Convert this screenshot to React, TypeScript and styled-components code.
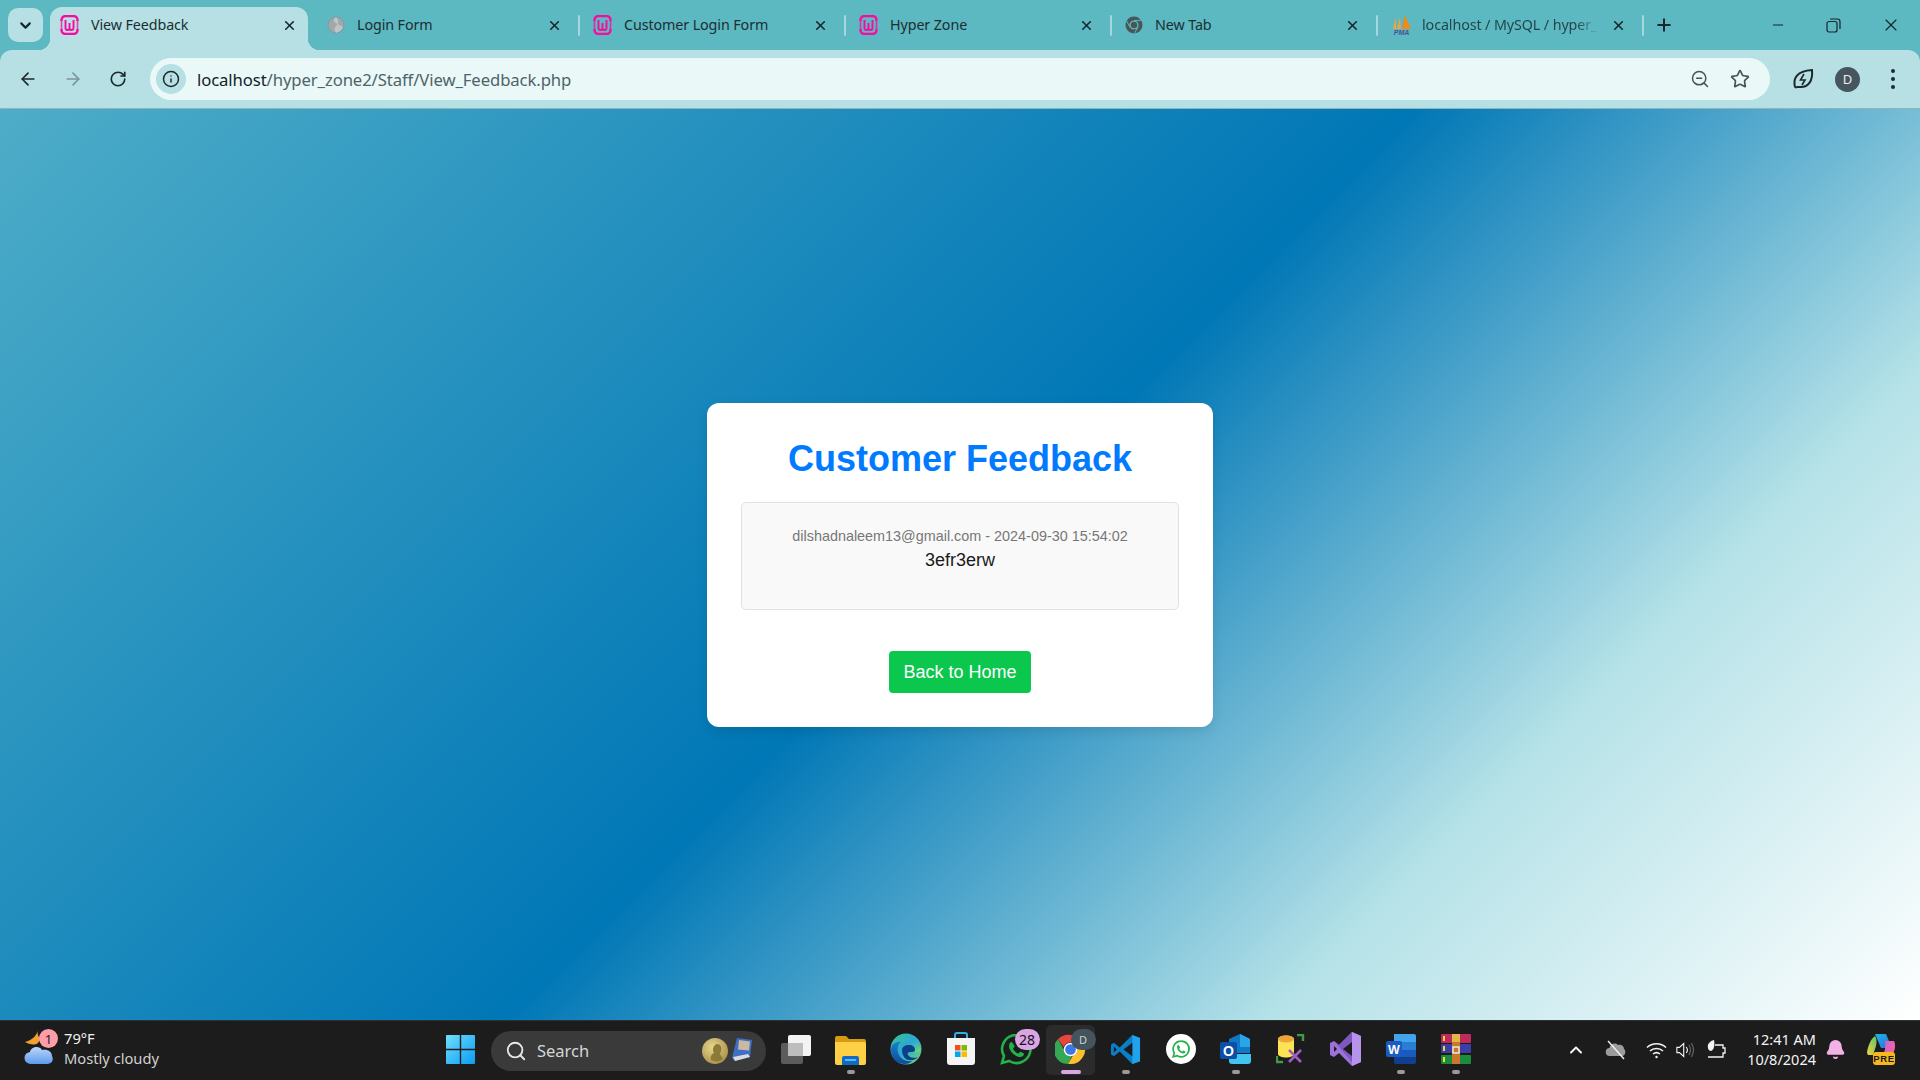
import React from "react";
import styled, { createGlobalStyle } from "styled-components";
import { ArrowLeft, ArrowRight, RotateCw, Info, ZoomOut, Star, X, Plus, Minus, ChevronDown, ChevronUp, Search as SearchGlyph, Bell } from "lucide-react";

const Global = createGlobalStyle`
  html, body { margin: 0; padding: 0; height: 100%; overflow: hidden; }
  #root { height: 100%; }
  * { box-sizing: border-box; }
`;

const Screen = styled.div`
  height: 1080px;
  display: flex;
  flex-direction: column;
  font-family: "Noto Sans", "Open Sans", sans-serif;
  background: #5cb8c1;
`;

const TabStrip = styled.div`
  height: 50px;
  flex: none;
  display: flex;
  align-items: flex-end;
  padding-left: 8px;
  background: #5cb8c1;
`;

const TabMenu = styled.div`
  width: 35px;
  height: 34px;
  margin: 0 7px 8px 0;
  border-radius: 10px;
  background: #b6e0e4;
  color: #16282b;
  display: flex;
  align-items: center;
  justify-content: center;
`;

const ActiveTab = styled.div`
  position: relative;
  width: 258px;
  height: 43px;
  margin-right: 6px;
  padding: 0 11px 7px 10px;
  display: flex;
  align-items: center;
  gap: 12px;
  border-radius: 12px 12px 0 0;
  background: #b6e0e4;
  &::before, &::after {
    content: "";
    position: absolute;
    bottom: 0;
    width: 12px;
    height: 12px;
  }
  &::before { left: -12px; background: radial-gradient(circle at 0 0, transparent 12px, #b6e0e4 12.5px); }
  &::after { right: -12px; background: radial-gradient(circle at 100% 0, transparent 12px, #b6e0e4 12.5px); }
`;

const Tab = styled.div`
  width: 266px;
  height: 50px;
  padding-left: 13px;
  display: flex;
  align-items: center;
  gap: 12px;
`;

const TabTitle = styled.span<{ $faded?: boolean }>`
  flex: 1;
  min-width: 0;
  font-size: 14.3px;
  line-height: 20px;
  letter-spacing: -0.1px;
  white-space: nowrap;
  overflow: hidden;
  color: #1c2e32;
  ${(p) => p.$faded && `
    -webkit-mask-image: linear-gradient(90deg, #000 88%, transparent 100%);
    mask-image: linear-gradient(90deg, #000 88%, transparent 100%);
    color: #24474d;
    margin-left: -2px;
  `}
`;

const CloseSlot = styled.span`
  width: 16px;
  height: 16px;
  flex: none;
  color: #16282b;
  display: flex;
  align-items: center;
  justify-content: center;
`;

const TabSep = styled.span`
  width: 2px;
  height: 21px;
  margin-left: 4px;
  flex: none;
  border-radius: 1px;
  background: #a5d8dd;
`;

const NewTab = styled.div`
  width: 40px;
  height: 50px;
  color: #16282b;
  display: flex;
  align-items: center;
  justify-content: center;
`;

const WindowControls = styled.div`
  margin-left: auto;
  display: flex;
`;

const WindowButton = styled.div<{ $w?: number }>`
  width: ${(p) => p.$w ?? 58}px;
  height: 50px;
  color: #14262a;
  display: flex;
  align-items: center;
  justify-content: center;
`;

const Toolbar = styled.div`
  height: 59px;
  flex: none;
  padding-left: 5px;
  display: flex;
  align-items: center;
  border-radius: 12px 12px 0 0;
  border-bottom: 1px solid #8fb4ba;
  background: #b6e0e4;
`;

const ToolButton = styled.div<{ $dim?: boolean }>`
  width: 45px;
  height: 42px;
  flex: none;
  color: ${(p) => (p.$dim ? "#7d9499" : "#1d2a2d")};
  display: flex;
  align-items: center;
  justify-content: center;
`;

const AddressBar = styled.div`
  width: 1620px;
  height: 42px;
  margin: 0 10px 0 10px;
  padding: 0 10px 0 6px;
  border-radius: 21px;
  background: #ebf8f8;
  display: flex;
  align-items: center;
`;

const InfoChip = styled.div`
  width: 30px;
  height: 30px;
  flex: none;
  margin-right: 11px;
  border-radius: 50%;
  background: #b6e0e4;
  color: #1d2a2d;
  display: flex;
  align-items: center;
  justify-content: center;
`;

const Url = styled.div`
  flex: 1;
  font-size: 16.7px;
  letter-spacing: -0.1px;
  color: #4d6468;
  white-space: nowrap;
`;

const UrlHost = styled.span`
  color: #14232a;
`;

const AddressAction = styled.div`
  width: 40px;
  height: 30px;
  color: #475356;
  display: flex;
  align-items: center;
  justify-content: center;
`;

const Avatar = styled.div`
  width: 25px;
  height: 25px;
  border-radius: 50%;
  background: #47555e;
  color: #e7eef0;
  font-size: 13px;
  display: flex;
  align-items: center;
  justify-content: center;
`;

const Dots = styled.div`
  display: flex;
  flex-direction: column;
  gap: 4px;
`;

const Dot = styled.span`
  width: 4px;
  height: 4px;
  border-radius: 50%;
  background: #1d2a2d;
`;

const Page = styled.main`
  flex: 1;
  min-height: 0;
  display: flex;
  align-items: center;
  justify-content: center;
  background: linear-gradient(135deg, #4eadc8 0%, #0077b6 50%, #b5e2e8 77%, #ffffff 100%);
`;

const Card = styled.section`
  width: 506px;
  height: 324px;
  padding: 35px 34px 34px;
  border-radius: 12px;
  background: #fff;
  box-shadow: 0 4px 12px rgba(0, 0, 0, 0.1);
  font-family: "Liberation Sans", Arial, sans-serif;
  text-align: center;
`;

const Title = styled.h1`
  margin: 0 0 23px;
  font-size: 36px;
  line-height: 41px;
  font-weight: 700;
  color: #007bff;
`;

const FeedbackItem = styled.div`
  height: 108px;
  padding-top: 25px;
  border: 1px solid #dfe1e5;
  border-radius: 5px;
  background: #f9f9f9;
`;

const FeedbackMeta = styled.div`
  font-size: 14.4px;
  line-height: 16px;
  color: #777;
`;

const FeedbackText = styled.div`
  margin-top: 6px;
  font-size: 18px;
  line-height: 21px;
  color: #1a1a1a;
`;

const HomeButton = styled.a`
  display: inline-block;
  margin-top: 41px;
  padding: 0 14px;
  height: 42px;
  line-height: 42px;
  border-radius: 4px;
  background: #0bc74e;
  color: #fff;
  font-size: 18px;
  text-decoration: none;
`;

const Taskbar = styled.footer`
  height: 60px;
  flex: none;
  display: flex;
  align-items: center;
  border-top: 1px solid #2b3135;
  background: #1c1c1c;
  color: #f2f2f2;
`;

const Weather = styled.div`
  position: relative;
  width: 446px;
  height: 100%;
  flex: none;
  padding: 0 0 2px 24px;
  display: flex;
  align-items: center;
  gap: 9px;
`;

const WeatherBadge = styled.span`
  position: absolute;
  left: 39px;
  top: 8px;
  width: 19px;
  height: 19px;
  border-radius: 50%;
  background: #ff9ca9;
  color: #27191c;
  font-size: 13px;
  display: flex;
  align-items: center;
  justify-content: center;
`;

const WeatherText = styled.div`
  display: flex;
  flex-direction: column;
  padding-bottom: 3px;
  font-size: 14.7px;
  line-height: 20px;
`;

const WeatherSub = styled.span`
  color: #d0d0d0;
`;

const StartSlot = styled.div`
  width: 45px;
  flex: none;
  padding-bottom: 2px;
`;

const SearchBox = styled.div`
  width: 275px;
  height: 40px;
  flex: none;
  padding: 0 13px 0 14px;
  border-radius: 20px;
  background: #3a3a3a;
  display: flex;
  align-items: center;
  gap: 10px;
  font-size: 16.5px;
  color: #d6d6d6;
`;

const SearchLabel = styled.span`
  flex: 1;
`;

const AppRow = styled.div`
  height: 100%;
  margin-left: 2px;
  display: flex;
`;

const AppSlot = styled.div<{ $active?: boolean }>`
  position: relative;
  width: 55px;
  height: 100%;
  display: flex;
  align-items: center;
  justify-content: center;
  padding-bottom: 3px;
  &::before {
    content: "";
    display: ${(p) => (p.$active ? "block" : "none")};
    position: absolute;
    inset: 4px 3px 5px 3px;
    border-radius: 5px;
    background: #2b2b2b;
  }
  & > svg { position: relative; }
`;

const RunDot = styled.span<{ $active?: boolean }>`
  position: absolute;
  bottom: 6px;
  left: 50%;
  width: ${(p) => (p.$active ? "20px" : "8px")};
  height: 4px;
  border-radius: 2px;
  transform: translateX(-50%);
  background: ${(p) => (p.$active ? "#dba6e3" : "#9a9a9a")};
`;

const CountBadge = styled.span<{ $dark?: boolean }>`
  position: absolute;
  left: 50%;
  top: 8px;
  margin-left: ${(p) => (p.$dark ? "0" : "-1px")};
  width: 25px;
  height: 21px;
  border-radius: 11px;
  background: ${(p) => (p.$dark ? "#45535c" : "#d9a5e2")};
  color: ${(p) => (p.$dark ? "#c9d3d8" : "#181018")};
  font-size: ${(p) => (p.$dark ? "11px" : "14px")};
  display: flex;
  align-items: center;
  justify-content: center;
`;

const Tray = styled.div`
  margin-left: auto;
  padding: 0 12px 2px 0;
  height: 100%;
  display: flex;
  align-items: center;
`;

const TraySlot = styled.div<{ $w: number }>`
  width: ${(p) => p.$w}px;
  flex: none;
  display: flex;
  align-items: center;
  justify-content: center;
`;

const Clock = styled.div`
  width: 78px;
  flex: none;
  padding-bottom: 2px;
  text-align: right;
  font-size: 14.5px;
  line-height: 20px;
  color: #f4f4f4;
`;

const Wamp = ({ faded }: { faded?: boolean }) =>
  faded ? (
    <svg width="18" height="18" viewBox="0 0 18 18" style={{ flex: "none" }}>
      <circle cx="9" cy="9" r="8" fill="#9fa9ab" stroke="#8a9799" />
      <path d="M9 1c-3 2-3 5 0 6 2 1 1 3-1 4-1 2 0 4 1 6 3-1 6-3 7-6-2-2-4-1-5-3 0-2 1-4-2-7z" fill="#bcc6c8" />
    </svg>
  ) : (
    <svg width="19" height="20" viewBox="0 0 19 20" fill="none" style={{ flex: "none" }}>
      <path d="M1.500 6V5a4 4 0 0 1 4-4h8a4 4 0 0 1 4 4v1M1.500 14v1a4 4 0 0 0 4 4h8a4 4 0 0 0 4-4v-1" stroke="#fb0aa0" strokeWidth="2.400" />
      <path d="M1.500 6v8M17.500 6v8" stroke="#fb0aa0" strokeWidth="1.600" opacity=".75" />
      <path d="M5.500 5v8a2 2 0 0 0 4 0V8v5a2 2 0 0 0 4 0V5" stroke="#fb0aa0" strokeWidth="1.900" />
    </svg>
  );

const ChromeMono = () => (
  <svg width="18" height="18" viewBox="0 0 18 18" style={{ flex: "none" }}>
    <circle cx="9" cy="9" r="8.500" fill="#4a5557" />
    <circle cx="9" cy="9" r="4.600" fill="#5cb8c1" />
    <circle cx="9" cy="9" r="3.200" fill="#4a5557" />
    <path d="M9 4.400h7.400M5 11.300 1.600 5M13 11.300 9.300 17.400" stroke="#5cb8c1" strokeWidth="1" />
  </svg>
);

const Pma = () => (
  <svg width="21" height="20" viewBox="0 0 21 20" style={{ flex: "none" }}>
    <path d="M5 2 2 14h3z" fill="#f2a33a" />
    <path d="M9 2 6 14h4z" fill="#f2a33a" />
    <path d="M14 0 11 14h9z" fill="#ee8a1e" />
    <text x="10.500" y="19.500" textAnchor="middle" fontFamily="Liberation Sans" fontStyle="italic" fontWeight="700" fontSize="7" fill="#4a4f9a">PMA</text>
  </svg>
);

const WeatherIcon = () => (
  <svg width="31" height="40" viewBox="0 0 31 40" style={{ flex: "none" }}>
    <defs>
      <linearGradient id="cloudG" x1="0" y1="0" x2="0" y2="1">
        <stop offset="0" stopColor="#bcd6fa" />
        <stop offset="1" stopColor="#5c9bec" />
      </linearGradient>
    </defs>
    <path d="M14 1c-2 5-6 9-13 11 4 2 9 4 13 1 1-2 2-3 3-4-3-2-4-5-3-8z" fill="#f3a12e" />
    <path d="M7 34a6 6 0 0 1-1-12c1-5 9-7 12-2 6-1 10 2 10 6 2 4 0 8-5 8z" fill="url(#cloudG)" />
  </svg>
);

const WinLogo = () => (
  <svg width="29" height="29" viewBox="0 0 29 29" style={{ display: "block" }}>
    <defs>
      <linearGradient id="winG" x1="0" y1="0" x2="1" y2="1">
        <stop offset="0" stopColor="#6ee0fb" />
        <stop offset="1" stopColor="#0b9cf4" />
      </linearGradient>
    </defs>
    <path d="M0 1a1 1 0 0 1 1-1h12.800v13.800H0zM15.200 0H28a1 1 0 0 1 1 1v12.800H15.200zM0 15.200h13.800V29H1a1 1 0 0 1-1-1zM15.200 15.200H29V28a1 1 0 0 1-1 1H15.200z" fill="url(#winG)" />
  </svg>
);

const Medal = () => (
  <svg width="51" height="30" viewBox="0 0 51 30" style={{ flex: "none" }}>
    <defs>
      <radialGradient id="gold" cx=".4" cy=".35" r=".75">
        <stop offset="0" stopColor="#e8d68e" />
        <stop offset="1" stopColor="#a48c42" />
      </radialGradient>
    </defs>
    <circle cx="13" cy="15" r="13" fill="url(#gold)" />
    <path d="M9 24c-1-4 1-6 3-7-2-3-1-8 3-9 4 0 5 4 4 7l-1 3 3 5c-3 3-8 3-12 1z" fill="#8e7a38" />
    <path d="m35 2 15 2-2 17-15 4-3-3z" fill="#3f6fc4" />
    <path d="m37 4 11 1.500-1 9-11-1z" fill="#c9b9a3" />
    <path d="m31 21 15-3 2 3-15 4z" fill="#d8dbe2" />
  </svg>
);

const TaskView = () => (
  <svg width="32" height="32" viewBox="0 0 32 32">
    <rect x="1" y="10" width="22" height="21" rx="2" fill="#5c5c5c" />
    <rect x="8" y="2" width="23" height="21" rx="2" fill="#f3f3f3" />
    <rect x="8" y="10" width="15" height="13" fill="#bdbdbd" />
  </svg>
);

const Explorer = () => (
  <svg width="31" height="31" viewBox="0 0 31 31">
    <path d="M0 4a2 2 0 0 1 2-2h9l3 3h15a2 2 0 0 1 2 2v6H0z" fill="#d99a12" />
    <path d="M0 8h29a2 2 0 0 1 2 2v19a2 2 0 0 1-2 2H2a2 2 0 0 1-2-2z" fill="#fdd045" />
    <path d="M7 24a2 2 0 0 1 2-2h13a2 2 0 0 1 2 2v7H7z" fill="#0f6cc4" />
    <rect x="10" y="25" width="11" height="2" fill="#5fb4ef" />
  </svg>
);

const Edge = () => (
  <svg width="32" height="32" viewBox="0 0 32 32">
    <defs>
      <linearGradient id="edgeA" x1="0" y1="0" x2="1" y2="1">
        <stop offset="0" stopColor="#39c48c" />
        <stop offset=".5" stopColor="#2aa8d8" />
        <stop offset="1" stopColor="#78dc63" />
      </linearGradient>
      <linearGradient id="edgeB" x1="0" y1="0" x2="0" y2="1">
        <stop offset="0" stopColor="#1b7fd0" />
        <stop offset="1" stopColor="#0f4a9c" />
      </linearGradient>
    </defs>
    <circle cx="16" cy="16" r="15.500" fill="url(#edgeA)" />
    <path d="M1 15C2 8 8 5 13 5c8 0 16 4 18 12-1 2-5 3-8 2 2-3-1-7-6-7-8 0-14 1-16 3z" fill="url(#edgeA)" />
    <path d="M1 17c0-6 6-9 10-8-3 2-4 6-3 10 1 6 7 10 14 9-2 2-4 3-7 3C7 31 1 25 1 17z" fill="url(#edgeB)" />
    <path d="M12 17c0-3 3-5 7-5s6 2 6 5c0 1-1 2-3 2h-2c-2 0-3 1-2 3 1 2 5 4 10 2-2 2-5 4-9 3-4 0-7-5-7-10z" fill="#0d3f8a" />
  </svg>
);

const Store = () => (
  <svg width="30" height="34" viewBox="0 0 30 34">
    <path d="M9 8V3a2 2 0 0 1 2-2h8a2 2 0 0 1 2 2v5" fill="none" stroke="#32b0e8" strokeWidth="2" />
    <path d="M1 6h28v24a3 3 0 0 1-3 3H4a3 3 0 0 1-3-3z" fill="#f5f5f5" />
    <rect x="9" y="13" width="5.500" height="5.500" fill="#f25022" />
    <rect x="15.500" y="13" width="5.500" height="5.500" fill="#7fba00" />
    <rect x="9" y="19.500" width="5.500" height="5.500" fill="#00a4ef" />
    <rect x="15.500" y="19.500" width="5.500" height="5.500" fill="#ffb900" />
  </svg>
);

const WhatsGlyph = ({ size, ring, fill }: { size: number; ring: string; fill: string }) => (
  <svg width={size} height={size} viewBox="0 0 32 32">
    <path d="M16 2a14 14 0 0 0-12 21L2 30l7.300-2A14 14 0 1 0 16 2z" fill={fill} stroke={ring} strokeWidth="2.600" />
    <path d="M11.500 9c-1 0-2.500 1.500-2.500 4 0 5 6 11 11 11 2.500 0 4-1.600 4-3 0-.6-3-2.200-3.600-2.200s-1.200 1.700-2 1.700c-1.600 0-5.300-3.400-5.300-5 0-.8 1.500-1.400 1.500-2S12.300 9 11.500 9z" fill={ring} />
  </svg>
);

const ChromeIcon = () => (
  <svg width="31" height="31" viewBox="0 0 32 32">
    <path d="M16 1a15 15 0 0 1 13 7.500H16a7.500 7.500 0 0 0-7 5L3 5.500A15 15 0 0 1 16 1z" fill="#e8453c" />
    <path d="M3 5.500l6.500 11a7.500 7.500 0 0 0 8 6.300L13.500 31A15 15 0 0 1 3 5.500z" fill="#34a853" />
    <path d="M29 8.500A15 15 0 0 1 13.500 30.800l6.600-11.300a7.500 7.500 0 0 0-.1-11z" fill="#fbc02d" />
    <circle cx="16" cy="16" r="7" fill="#fff" />
    <circle cx="16" cy="16" r="5.500" fill="#3b78e7" />
  </svg>
);

const VsCode = () => (
  <svg width="31" height="31" viewBox="0 0 32 32">
    <path d="M23 1 10 14 4 9 1 11v10l3 2 6-5 13 13 8-3V4z" fill="#0a7ec8" />
    <path d="M23 1l8 3v24l-8 3z" fill="#21a2ea" />
    <path d="M23 9v14l-9-7z" fill="#1c1c1c" />
    <path d="m4 13 3 3-3 3z" fill="#1c1c1c" />
  </svg>
);

const WhatsCircle = () => (
  <svg width="30" height="30" viewBox="0 0 30 30">
    <circle cx="15" cy="15" r="15" fill="#fff" />
    <g transform="translate(6 6) scale(.56)">
      <path d="M16 2a14 14 0 0 0-12 21L2 30l7.300-2A14 14 0 1 0 16 2z" fill="#fff" stroke="#25b24a" strokeWidth="3" />
      <path d="M11.500 9c-1 0-2.500 1.500-2.500 4 0 5 6 11 11 11 2.500 0 4-1.600 4-3 0-.6-3-2.200-3.600-2.200s-1.200 1.700-2 1.700c-1.600 0-5.300-3.400-5.300-5 0-.8 1.500-1.400 1.500-2S12.300 9 11.500 9z" fill="#25b24a" />
    </g>
  </svg>
);

const Outlook = () => (
  <svg width="31" height="30" viewBox="0 0 31 30">
    <path d="M9 5 20 0l10 5v14H9z" fill="#0f78c8" />
    <path d="M20 0l10 5v8H20z" fill="#2aa6e8" />
    <path d="M9 20h22v7a3 3 0 0 1-3 3H12a3 3 0 0 1-3-3z" fill="#40c4f0" />
    <rect x="0" y="8" width="17" height="17" rx="2" fill="#0c4fa8" />
    <text x="8.500" y="21.500" textAnchor="middle" fontFamily="Liberation Sans" fontWeight="700" fontSize="14" fill="#fff">O</text>
  </svg>
);

const DbTool = () => (
  <svg width="30" height="30" viewBox="0 0 30 30" fill="none">
    <path d="M2 5c0-2 4-3.500 8-3.500s8 1.500 8 3.500v15c0 2-4 3.500-8 3.500s-8-1.500-8-3.500z" fill="#fbe356" />
    <ellipse cx="10" cy="5" rx="8" ry="3.500" fill="#f0a53a" />
    <path d="M21 1h6v6M1 22v6h6" stroke="#3f9b47" strokeWidth="2.400" />
    <path d="m13 16 12 12M25 16 13 28" stroke="#a05ec0" strokeWidth="2.600" />
  </svg>
);

const VisualStudio = () => (
  <svg width="31" height="34" viewBox="0 0 31 34">
    <path d="M22 0 31 4v26l-9 4L9 21l-5 4-4-2V11l4-2 5 4z" fill="#9a72d8" />
    <path d="M22 0 9 13 4 9l18 21z" fill="#7e57c2" />
    <path d="M22 0l9 4v26l-9 4z" fill="#b794ec" />
    <path d="M22 10v14l-9-7z" fill="#1c1c1c" />
    <path d="m4 14 3 3-3 3z" fill="#1c1c1c" />
  </svg>
);

const Word = () => (
  <svg width="30" height="30" viewBox="0 0 30 30">
    <path d="M8 0h20a2 2 0 0 1 2 2v6H8z" fill="#41a5ee" />
    <rect x="8" y="8" width="22" height="8" fill="#2b7cd3" />
    <rect x="8" y="16" width="22" height="7" fill="#185abd" />
    <path d="M8 23h22v5a2 2 0 0 1-2 2H10a2 2 0 0 1-2-2z" fill="#103f91" />
    <rect x="0" y="7" width="16" height="16" rx="2" fill="#1a5cc4" />
    <text x="8" y="19.500" textAnchor="middle" fontFamily="Liberation Sans" fontWeight="700" fontSize="12.500" fill="#fff">W</text>
  </svg>
);

const WinRar = () => (
  <svg width="30" height="30" viewBox="0 0 30 30">
    <rect x="0" y="0" width="30" height="9" rx="1" fill="#c02a5a" />
    <rect x="0" y="10" width="30" height="9" rx="1" fill="#3a3fa8" />
    <rect x="0" y="21" width="30" height="9" rx="1" fill="#1d8a3e" />
    <rect x="11" y="0" width="8" height="30" fill="#c9782a" />
    <rect x="11" y="0" width="8" height="8" fill="#e0b84a" />
    <rect x="12" y="13" width="6" height="6" fill="none" stroke="#eee" strokeWidth="1.400" />
    <rect x="2" y="2" width="2" height="5" fill="#f6d53c" />
    <rect x="2" y="12" width="2" height="5" fill="#f6d53c" />
    <rect x="2" y="23" width="2" height="5" fill="#f6d53c" />
  </svg>
);

const MutedCloud = () => (
  <svg width="22" height="20" viewBox="0 0 22 20">
    <path d="M5 16a4 4 0 0 1-.5-8C5 4 10 2 13 5c4-1 6 2 6 4 2 1 2 7-2 7z" fill="#9c9c9c" />
    <path d="M3 1l16 18" stroke="#f2f2f2" strokeWidth="1.400" />
  </svg>
);

const Wifi = () => (
  <svg width="21" height="18" viewBox="0 0 21 18" fill="none" stroke="#f4f4f4" strokeWidth="1.600">
    <path d="M1 6.500c5-5 14-5 19 0M4 10c3.500-3.300 9.500-3.300 13 0M7 13c2-1.600 5-1.600 7 0" />
    <circle cx="10.500" cy="16" r="1.200" fill="#f4f4f4" stroke="none" />
  </svg>
);

const Volume = () => (
  <svg width="21" height="20" viewBox="0 0 21 20" fill="none" stroke="#f4f4f4" strokeWidth="1.300">
    <path d="M1 7h3l5-4.500v15L4 13H1z" />
    <path d="M12 6.500c1.500 2 1.500 5 0 7" />
    <path d="M15 4c2.300 3.500 2.300 8.500 0 12M18 2c3 5 3 11 0 16" stroke="#666" />
  </svg>
);

const LeafBattery = () => (
  <svg width="21" height="20" viewBox="0 0 21 20" fill="none">
    <path d="M9 5h8v3h2v5h-2v4H2" stroke="#f4f4f4" strokeWidth="1.300" />
    <path d="M8 0C4 1 1 4 2 8c0 2 2 3 3 3 3-1 4-6 3-11z" fill="#f4f4f4" />
  </svg>
);

const Copilot = () => (
  <svg width="30" height="34" viewBox="0 0 30 34">
    <defs>
      <linearGradient id="copA" x1="0" y1="0" x2="1" y2="1">
        <stop offset="0" stopColor="#1fb4e8" />
        <stop offset="1" stopColor="#2a6fd8" />
      </linearGradient>
      <linearGradient id="copB" x1="0" y1="1" x2="1" y2="0">
        <stop offset="0" stopColor="#f6d23c" />
        <stop offset="1" stopColor="#5ec46a" />
      </linearGradient>
      <linearGradient id="copC" x1="0" y1="0" x2="1" y2="1">
        <stop offset="0" stopColor="#d65ed0" />
        <stop offset="1" stopColor="#f06a9a" />
      </linearGradient>
    </defs>
    <path d="M9 1h11l6 14H15z" fill="url(#copA)" />
    <path d="M1 20C2 12 5 6 9 3c2 3 2 8 0 13l-2 6H2z" fill="url(#copB)" />
    <path d="M19 8h9c2 4 1 9-1 13l-10 1c2-4 3-9 2-14z" fill="url(#copC)" />
    <rect x="7" y="19" width="22" height="13" rx="3" fill="#f6b81f" />
    <text x="18" y="29" textAnchor="middle" fontFamily="Liberation Sans" fontWeight="700" fontSize="9.500" letterSpacing=".6" fill="#1c1c1c">PRE</text>
  </svg>
);

const LeafBolt = () => (
  <svg width="22" height="22" viewBox="0 0 22 22" fill="none" stroke="#1d2a2d" strokeWidth="2">
    <path d="M3 19c-2-8 1-16 17-17 1 10-3 18-13 17-1.500 0-3-.5-4 1" />
    <path d="M12 6l-3.500 6H13l-3 5" strokeWidth="1.600" />
  </svg>
);

const Restore = () => (
  <svg width="15" height="15" viewBox="0 0 15 15" fill="none" stroke="currentColor" strokeWidth="1.200">
    <rect x="1" y="3.500" width="10" height="10.500" rx="2" />
    <path d="M4 1h7.500A2.500 2.500 0 0 1 14 3.500V11" />
  </svg>
);

const tabs: { title: string; icon: React.ReactNode; faded?: boolean }[] = [
  { title: "Login Form", icon: <Wamp faded /> },
  { title: "Customer Login Form", icon: <Wamp /> },
  { title: "Hyper Zone", icon: <Wamp /> },
  { title: "New Tab", icon: <ChromeMono /> },
  { title: "localhost / MySQL / hyper_", icon: <Pma />, faded: true },
];

export default function App() {
  return (
    <Screen>
      <Global />
      <TabStrip>
        <TabMenu><ChevronDown size={17} strokeWidth={3} /></TabMenu>
        <ActiveTab>
          <Wamp />
          <TabTitle>View Feedback</TabTitle>
          <CloseSlot><X size={15} strokeWidth={2.6} /></CloseSlot>
        </ActiveTab>
        {tabs.map((t) => (
          <Tab key={t.title}>
            {t.icon}
            <TabTitle $faded={t.faded}>{t.title}</TabTitle>
            <CloseSlot><X size={15} strokeWidth={2.6} /></CloseSlot>
            <TabSep />
          </Tab>
        ))}
        <NewTab><Plus size={20} strokeWidth={2.4} /></NewTab>
        <WindowControls>
          <WindowButton $w={52}><Minus size={16} strokeWidth={1.5} /></WindowButton>
          <WindowButton><Restore /></WindowButton>
          <WindowButton><X size={20} strokeWidth={1.4} /></WindowButton>
        </WindowControls>
      </TabStrip>

      <Toolbar>
        <ToolButton><ArrowLeft size={20} strokeWidth={2} /></ToolButton>
        <ToolButton $dim><ArrowRight size={20} strokeWidth={2} /></ToolButton>
        <ToolButton><RotateCw size={18} strokeWidth={2.2} /></ToolButton>
        <AddressBar>
          <InfoChip><Info size={18} strokeWidth={2} /></InfoChip>
          <Url><UrlHost>localhost</UrlHost>/hyper_zone2/Staff/View_Feedback.php</Url>
          <AddressAction><ZoomOut size={20} strokeWidth={1.8} /></AddressAction>
          <AddressAction><Star size={20} strokeWidth={2} /></AddressAction>
        </AddressBar>
        <ToolButton><LeafBolt /></ToolButton>
        <ToolButton><Avatar>D</Avatar></ToolButton>
        <ToolButton><Dots><Dot /><Dot /><Dot /></Dots></ToolButton>
      </Toolbar>

      <Page>
        <Card>
          <Title>Customer Feedback</Title>
          <FeedbackItem>
            <FeedbackMeta>dilshadnaleem13@gmail.com - 2024-09-30 15:54:02</FeedbackMeta>
            <FeedbackText>3efr3erw</FeedbackText>
          </FeedbackItem>
          <HomeButton href="#">Back to Home</HomeButton>
        </Card>
      </Page>

      <Taskbar>
        <Weather>
          <WeatherIcon />
          <WeatherBadge>1</WeatherBadge>
          <WeatherText>
            <span>79°F</span>
            <WeatherSub>Mostly cloudy</WeatherSub>
          </WeatherText>
        </Weather>
        <StartSlot><WinLogo /></StartSlot>
        <SearchBox>
          <SearchGlyph size={22} strokeWidth={2} color="#e8e8e8" />
          <SearchLabel>Search</SearchLabel>
          <Medal />
        </SearchBox>
        <AppRow>
          <AppSlot><TaskView /></AppSlot>
          <AppSlot><Explorer /><RunDot /></AppSlot>
          <AppSlot><Edge /></AppSlot>
          <AppSlot><Store /></AppSlot>
          <AppSlot><WhatsGlyph size={32} ring="#22b14c" fill="#1c1c1c" /><CountBadge>28</CountBadge></AppSlot>
          <AppSlot $active><ChromeIcon /><CountBadge $dark>D</CountBadge><RunDot $active /></AppSlot>
          <AppSlot><VsCode /><RunDot /></AppSlot>
          <AppSlot><WhatsCircle /></AppSlot>
          <AppSlot><Outlook /><RunDot /></AppSlot>
          <AppSlot><DbTool /></AppSlot>
          <AppSlot><VisualStudio /></AppSlot>
          <AppSlot><Word /><RunDot /></AppSlot>
          <AppSlot><WinRar /><RunDot /></AppSlot>
        </AppRow>
        <Tray>
          <TraySlot $w={40}><ChevronUp size={20} strokeWidth={2.4} color="#f4f4f4" /></TraySlot>
          <TraySlot $w={40}><MutedCloud /></TraySlot>
          <TraySlot $w={40}><Wifi /></TraySlot>
          <TraySlot $w={18}><Volume /></TraySlot>
          <TraySlot $w={44}><LeafBattery /></TraySlot>
          <Clock>12:41 AM<br />10/8/2024</Clock>
          <TraySlot $w={38}><Bell size={21} fill="#f3b2e6" color="#f3b2e6" /></TraySlot>
          <TraySlot $w={54}><Copilot /></TraySlot>
        </Tray>
      </Taskbar>
    </Screen>
  );
}
